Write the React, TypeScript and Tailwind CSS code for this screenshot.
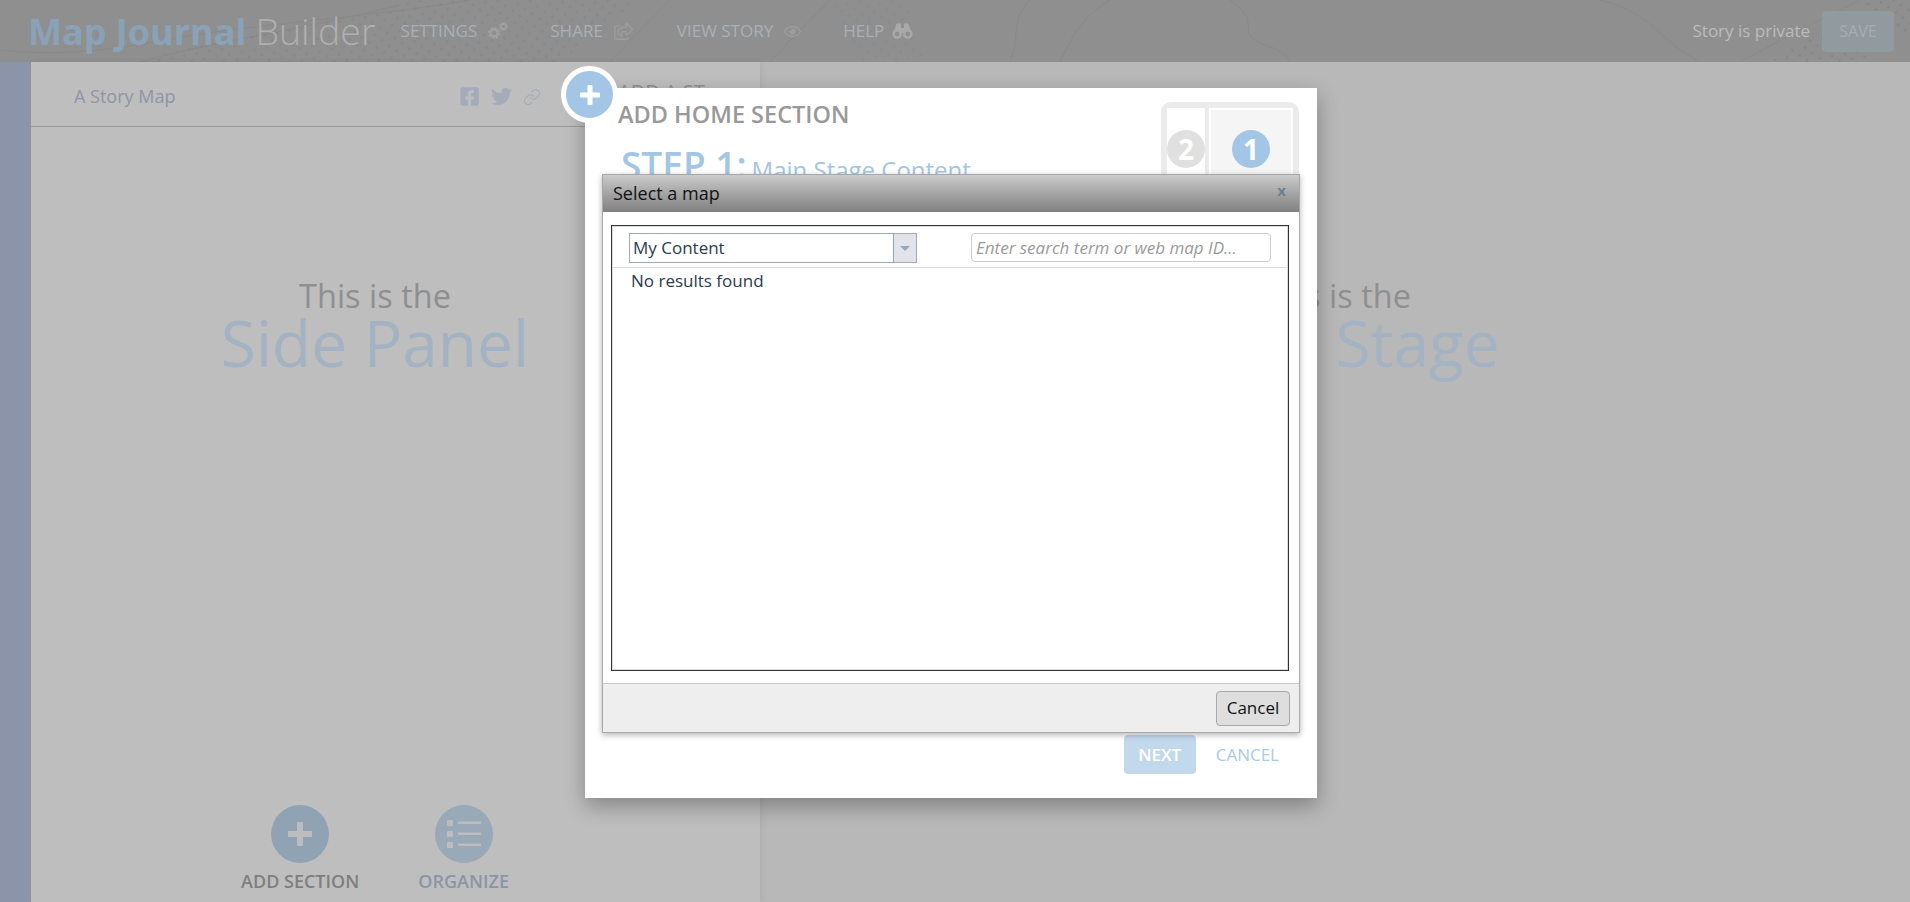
import { FaFacebookSquare, FaRegEye, FaRegShareSquare, FaTwitter } from "react-icons/fa";
import { Link as LinkIcon } from "lucide-react";

const font = "font-['Open_Sans',_'Noto_Sans',sans-serif]";

function Gears() {
  return (
    <svg width="20" height="18" viewBox="0 0 20 18" fill="none" stroke="#a0a0a0">
      <circle cx="6" cy="11" r="3.6" strokeWidth="2.6" />
      <circle cx="6" cy="11" r="5.6" strokeWidth="1.4" strokeDasharray="2 2.4" />
      <circle cx="15.5" cy="4.5" r="2.6" strokeWidth="2" />
      <circle cx="15.5" cy="4.5" r="4" strokeWidth="1" strokeDasharray="1.4 1.8" />
    </svg>
  );
}

function Binoculars() {
  return (
    <svg className="-ml-[3px]" width="21" height="18" viewBox="0 0 21 18" fill="none" stroke="#a9a9a9">
      <circle cx="5.2" cy="12" r="3.6" strokeWidth="2.4" />
      <circle cx="15.8" cy="12" r="3.6" strokeWidth="2.4" />
      <path d="M2 10 L5 2 H8.5 V9 M19 10 L16 2 H12.5 V9" fill="#a9a9a9" strokeWidth="1" />
      <rect x="8.5" y="6" width="4" height="5" fill="#a9a9a9" stroke="none" />
    </svg>
  );
}

function MapTexture() {
  return (
    <svg className="absolute inset-0 h-full w-full" viewBox="0 0 1910 62" preserveAspectRatio="none">
      <defs>
        <pattern id="dots" width="9" height="9" patternUnits="userSpaceOnUse" patternTransform="rotate(35)">
          <circle cx="3" cy="3" r="1.4" fill="#7f7f7f" />
        </pattern>
      </defs>
      <path d="M120 62 L340 18 L420 0 L640 0 L560 62 Z" fill="url(#dots)" opacity="0.4" />
      <path d="M1770 62 L1870 0 L1910 0 L1910 30 L1860 62 Z" fill="url(#dots)" opacity="0.55" />
      <path d="M830 0 L905 0 L925 62 L860 62 Z" fill="url(#dots)" opacity="0.25" />
      <g fill="none" stroke="#828282" strokeWidth="1" opacity="0.4">
        <path d="M0 50 C90 60 150 40 230 30 S420 10 470 0" />
        <path d="M140 62 C220 40 300 30 400 5" />
        <path d="M610 62 C640 30 650 20 670 0" />
        <path d="M770 62 C790 40 810 20 830 0" />
        <path d="M1010 62 C1020 40 1010 20 1030 0" />
        <path d="M1060 62 C1075 30 1085 15 1110 0" />
        <path d="M1230 0 C1260 20 1240 30 1255 40 S1280 45 1290 62" />
        <path d="M1600 0 C1640 10 1650 25 1680 50 L1700 62" />
        <path d="M1740 62 C1780 40 1820 20 1860 0" />
      </g>
    </svg>
  );
}

function NavItem(props: { label: string; icon: React.ReactNode; className: string }) {
  return (
    <div className={"flex items-center gap-[11px] text-[17px] text-[#a9b0b5] " + props.className}>
      <span>{props.label}</span>
      {props.icon}
    </div>
  );
}

function Header() {
  return (
    <header className="relative flex h-[62px] items-center bg-[#8f8f8f] pl-[28px] pr-[16px]">
      <MapTexture />
      <div className="relative flex w-full items-center">
        <h1 className="text-[36px] leading-none whitespace-nowrap">
          <span className="font-bold text-[#8aa2b8]">Map Journal</span>
          <span className="ml-[9px] text-[37.5px] font-light text-[#b0b0b0]">Builder</span>
        </h1>
        <NavItem className="ml-[25px]" label="SETTINGS" icon={<Gears />} />
        <NavItem className="ml-[42px] text-[#9da3a8]" label="SHARE" icon={<FaRegShareSquare size={19} color="#9b9b9b" />} />
        <NavItem className="ml-[44px] text-[#9da3a8]" label="VIEW STORY" icon={<FaRegEye size={17} color="#9c9c9c" />} />
        <NavItem className="ml-[42px]" label="HELP" icon={<Binoculars />} />
        <span className="ml-auto text-[17px] text-[#bcbcbc]">Story is private</span>
        <button className="ml-[12px] h-[41px] w-[72px] rounded-[4px] bg-[#919a9e] text-[16px] text-[#a7adb0]">SAVE</button>
      </div>
    </header>
  );
}

function RoundAction(props: { label: string; circle: string; text: string; children: React.ReactNode }) {
  return (
    <div className="flex flex-col items-center">
      <div className={"flex h-[58px] w-[58px] items-center justify-center rounded-full " + props.circle}>{props.children}</div>
      <span className={"mt-[6px] text-[18px] leading-[24px] font-semibold whitespace-nowrap " + props.text}>{props.label}</span>
    </div>
  );
}

function SidePanel() {
  return (
    <aside className="relative flex w-[729px] flex-col bg-[#bebebe] shadow-[2px_0_6px_rgba(0,0,0,0.06)]">
      <div className="flex h-[65px] items-center border-b border-[#9c9c9c] pt-[5px] pl-[43px]">
        <span className="w-[102px] text-[18px] whitespace-nowrap text-[#8d95a6]">A Story Map</span>
        <div className="ml-[283px] flex items-center gap-[11px]">
          <FaFacebookSquare size={21} color="#a5abba" />
          <FaTwitter size={21} color="#a5abba" />
          <LinkIcon size={18} color="#a5abba" strokeWidth={1.6} />
        </div>
      </div>
      <div className="flex flex-col items-center pt-[152px] pr-[41px]">
        <span className="text-[32.5px] leading-[34px] text-[#8f8f8f]">This is the</span>
        <span className="text-[64px] leading-[60px] text-[#a3b3c3]">Side Panel</span>
      </div>
      <div className="mt-auto flex justify-center gap-[59px] pr-[41px] pb-[9px]">
        <RoundAction label="ADD SECTION" circle="bg-[#8fa3b4]" text="text-[#7f7f7f]">
          <svg width="24" height="24" viewBox="0 0 24 24" fill="#bdbdbd">
            <rect x="9" y="0" width="6" height="24" rx="1" />
            <rect x="0" y="9" width="24" height="6" rx="1" />
          </svg>
        </RoundAction>
        <RoundAction label="ORGANIZE" circle="bg-[#9aa9b7]" text="text-[#8b95a8]">
          <svg width="34" height="28" viewBox="0 0 34 28" fill="#bdbdbd">
            <rect x="0" y="0" width="6" height="6" rx="1" />
            <rect x="0" y="11" width="6" height="6" rx="1" />
            <rect x="0" y="22" width="6" height="6" rx="1" />
            <rect x="11" y="1.5" width="23" height="2.5" />
            <rect x="11" y="12.5" width="23" height="2.5" />
            <rect x="11" y="23.5" width="23" height="2.5" />
          </svg>
        </RoundAction>
      </div>
    </aside>
  );
}

function MainStage() {
  return (
    <main className="flex flex-1 flex-col items-center bg-[#b8b8b8] pt-[217px]">
      <span className="text-[32.5px] leading-[34px] text-[#8f8f8f]">This is the</span>
      <span className="text-[64px] leading-[60px] text-[#a3b3c3]">Main Stage</span>
    </main>
  );
}

function LayoutThumb() {
  return (
    <div className="flex h-[110px] w-[138px] gap-[4px] rounded-[10px] border-[6px] border-[#ebebeb] bg-[#ebebeb]">
      <div className="flex w-[38px] justify-center bg-white pt-[22px]">
        <span className="flex h-[38px] w-[38px] items-center justify-center rounded-full bg-[#e0e0e0] text-[28px] font-bold text-white">2</span>
      </div>
      <div className="flex flex-1 justify-center border-2 border-white bg-[#f5f5f5] pt-[20px]">
        <span className="flex h-[38px] w-[38px] items-center justify-center rounded-full bg-[#a3c6e6] text-[28px] font-bold text-white">1</span>
      </div>
    </div>
  );
}

function AddSectionModal() {
  return (
    <div className="absolute top-[88px] left-[585px] flex h-[710px] w-[732px] flex-col bg-white pl-[33px] shadow-[0_8px_20px_rgba(0,0,0,0.3)]">
      <div className="flex justify-between pt-[14px] pr-[18px]">
        <div>
          <h2 className="text-[23.5px] leading-[24px] font-semibold whitespace-nowrap text-[#999999]">ADD HOME SECTION</h2>
          <div className="mt-[15px] ml-[3px] flex items-baseline gap-[5px] whitespace-nowrap text-[#a3c6e6]">
            <span className="text-[37px] leading-[48px] font-semibold">STEP 1:</span>
            <span className="text-[24px] leading-[48px]">Main Stage Content</span>
          </div>
        </div>
        <LayoutThumb />
      </div>
      <div className="mt-auto flex items-center justify-end gap-[20px] pr-[38px] pb-[24px]">
        <button className="h-[39px] w-[72px] rounded-[4px] bg-[#c2d8ec] text-[17px] font-semibold text-white">NEXT</button>
        <button className="text-[17px] text-[#a9c9e8]">CANCEL</button>
      </div>
    </div>
  );
}

function SelectMapDialog() {
  return (
    <div className="absolute top-[174px] left-[602px] flex h-[559px] w-[698px] flex-col border border-[#a8a8a8] bg-white shadow-[0_2px_6px_rgba(0,0,0,0.3)]">
      <div className="flex h-[37px] shrink-0 items-center justify-between bg-gradient-to-b from-[#cbcbcb] to-[#808080] pr-[13px] pl-[10px]">
        <span className="text-[18px] text-[#111]">Select a map</span>
        <span className="pb-[6px] text-[15px] leading-none font-bold text-[#6f7f90]">x</span>
      </div>
      <div className="flex flex-1 flex-col pt-[13px] pr-[10px] pb-[12px] pl-[8px]">
        <div className="flex flex-1 flex-col border border-[#333333] shadow-[inset_0_0_0_1px_#dddddd]">
          <div className="flex h-[41px] shrink-0 pt-[7px] pl-[17px]">
            <div className="flex h-[30px] w-[288px] items-center border border-[#a3a9b3]">
              <span className="flex-1 pl-[3px] text-[17px] text-[#2c3a4d]">My Content</span>
              <span className="flex h-full w-[23px] items-center justify-center border-l border-[#8fa5c0] bg-[#e2e4ea]">
                <span className="h-0 w-0 border-x-[5px] border-t-[5px] border-x-transparent border-t-[#94a8c8]" />
              </span>
            </div>
            <input
              type="text"
              placeholder="Enter search term or web map ID..."
              className="ml-[54px] h-[29px] w-[300px] rounded-[4px] border border-[#cccccc] pl-[4px] text-[17px] italic placeholder:text-[#9a9a9a] focus:outline-none"
            />
          </div>
          <div className="flex-1 border-t border-[#dddddd] pl-[19px] text-[17px] leading-[26px] text-[#2c3a4d]">
            No results found
          </div>
        </div>
      </div>
      <div className="flex h-[49px] shrink-0 items-center justify-end border-t border-[#cccccc] bg-[#eeeeee] pr-[9px]">
        <button className="h-[35px] w-[74px] rounded-[4px] border border-[#a8a8a8] bg-[#dedede] text-[17px] text-[#111]">Cancel</button>
      </div>
    </div>
  );
}

export default function App() {
  return (
    <div className={"relative flex h-[902px] w-[1910px] flex-col overflow-hidden " + font}>
      <Header />
      <div className="flex flex-1">
        <div className="w-[31px] bg-[#8b94a9]" />
        <SidePanel />
        <MainStage />
      </div>

      <span className="absolute top-[80px] left-[618px] text-[20px] leading-[24px] text-[#8f8f8f]">ADD A ST</span>
      <AddSectionModal />
      <div className="absolute top-[66px] left-[561px] flex h-[57px] w-[57px] items-center justify-center rounded-full border-[5px] border-white bg-[#a3c6e6]">
        <svg width="20" height="20" viewBox="0 0 20 20" fill="white">
          <rect x="7.5" y="0" width="5" height="20" rx="1" />
          <rect x="0" y="7.5" width="20" height="5" rx="1" />
        </svg>
      </div>
      <SelectMapDialog />
    </div>
  );
}
